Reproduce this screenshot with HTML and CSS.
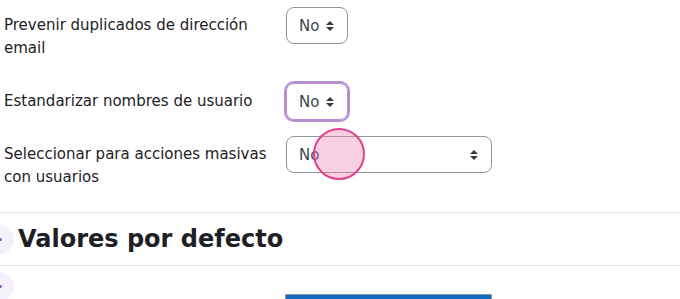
FILE: index.html
```html
<!DOCTYPE html>
<html lang="es">

<head>
    <meta charset="UTF-8">
    <meta name="viewport" content="width=device-width, initial-scale=1.0">
    <title>Configuración de usuarios</title>
    <link rel="stylesheet" href="styles.css">
</head>

<body>
    <div class="settings">
        <div class="form-row">
            <label class="form-label" for="dupemail">Prevenir duplicados de dirección email</label>
            <div class="form-control">
                <div class="select" id="dupemail">No<span class="arrows"></span></div>
            </div>
        </div>

        <div class="form-row">
            <label class="form-label" for="standardise">Estandarizar nombres de usuario</label>
            <div class="form-control">
                <div class="select focused" id="standardise">No<span class="arrows"></span></div>
            </div>
        </div>

        <div class="form-row">
            <label class="form-label" for="bulk">Seleccionar para acciones masivas con usuarios</label>
            <div class="form-control">
                <div class="select wide" id="bulk">No<span class="arrows"></span></div>
                <span class="touch"></span>
            </div>
        </div>

        <div class="section">
            <span class="collapse-icon"></span>
            <h3>Valores por defecto</h3>
        </div>

        <div class="section-next">
            <span class="collapse-icon"></span>
            <div class="blue-button"></div>
        </div>
    </div>
</body>

</html>
```

FILE: styles.css
```css
body {
    font-family: "DejaVu Sans", sans-serif;
    font-size: 15px;
    color: #1d2125;
    background-color: #fff;
    margin: 0;
    overflow: hidden;
}

.settings {
    padding-top: 7px;
}

.form-row {
    display: flex;
    align-items: flex-start;
    margin-bottom: 16px;
}

.form-label {
    width: 270px;
    padding: 7px 0 7px 4px;
    line-height: 23px;
    margin-right: 12px;
}

.form-control {
    position: relative;
}

.select {
    display: flex;
    align-items: center;
    justify-content: space-between;
    box-sizing: border-box;
    height: 37px;
    width: 62px;
    padding: 0 13px 0 12px;
    border: 1px solid #8f959e;
    border-radius: 8px;
    color: #3d4651;
}

.select.focused {
    border-color: #b48fd0;
    box-shadow: 0 0 0 2px #b48fd0;
}

.select.wide {
    width: 206px;
}

.arrows {
    display: flex;
    flex-direction: column;
    gap: 2px;
}

.arrows::before,
.arrows::after {
    content: "";
    border-left: 4px solid transparent;
    border-right: 4px solid transparent;
}

.arrows::before {
    border-bottom: 4px solid #343a40;
}

.arrows::after {
    border-top: 4px solid #343a40;
}

.touch {
    position: absolute;
    left: 27px;
    top: -8px;
    width: 48px;
    height: 48px;
    border-radius: 50%;
    border: 2px solid #e0418f;
    background: rgba(234, 120, 170, 0.35);
}

.section {
    display: flex;
    align-items: center;
    height: 52px;
    border-top: 1px solid #dee2e6;
    border-bottom: 1px solid #dee2e6;
    position: relative;
}

.collapse-icon {
    position: absolute;
    left: -15px;
    width: 29px;
    height: 29px;
    border-radius: 50%;
    background: #f5f1fa;
}

.collapse-icon::after {
    content: "";
    position: absolute;
    right: 12px;
    top: 13px;
    width: 3px;
    height: 3px;
    border-radius: 50%;
    background: #8a5cc7;
}

h3 {
    margin: 0 0 0 18px;
    font-size: 24px;
    font-weight: 700;
    color: #1d2125;
}

.section-next {
    position: relative;
    height: 33px;
    overflow: hidden;
}

.section-next .collapse-icon {
    top: 6px;
}

.blue-button {
    position: absolute;
    left: 285px;
    top: 28px;
    width: 207px;
    height: 20px;
    box-sizing: border-box;
    border: 1px solid #8f959e;
    background: #0f6cbf;
}
```
